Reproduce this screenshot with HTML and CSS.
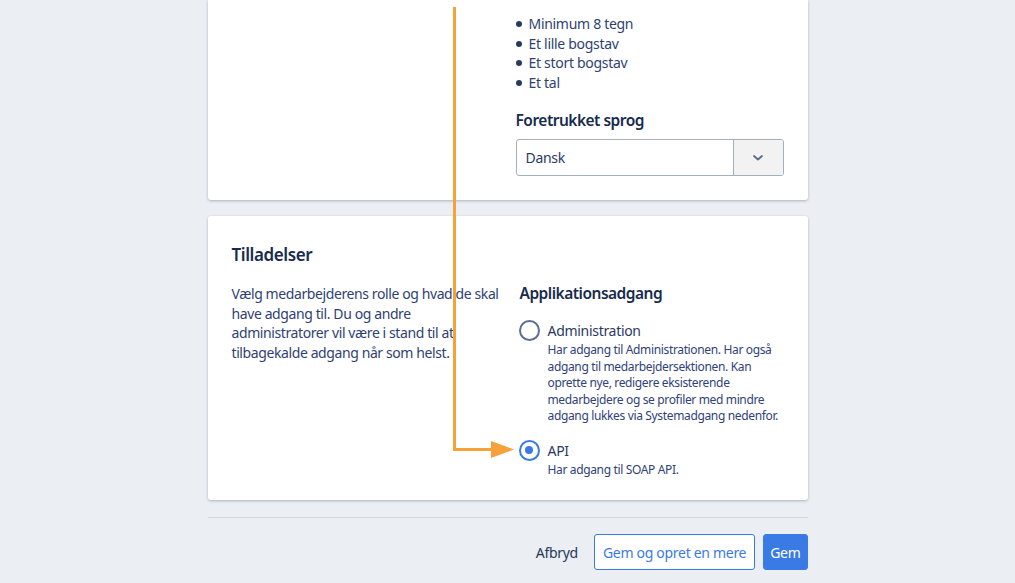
FILE: index.html
```html
<!DOCTYPE html>
<html lang="da">
<head>
<meta charset="utf-8">
<title>Medarbejder</title>
<link rel="stylesheet" href="styles.css">
</head>
<body>
<main class="page">
  <section class="card card-top">
    <div class="col-left"></div>
    <div class="col-right">
      <ul class="rules">
        <li>Minimum 8 tegn</li>
        <li>Et lille bogstav</li>
        <li>Et stort bogstav</li>
        <li>Et tal</li>
      </ul>
      <h3 class="field-title lang-title">Foretrukket sprog</h3>
      <div class="select">
        <span class="select-value">Dansk</span>
        <span class="select-btn">
          <svg width="12" height="8" viewBox="0 0 12 8"><path d="M2 2 L6 5.5 L10 2" fill="none" stroke="#5a6a85" stroke-width="1.8" stroke-linecap="round" stroke-linejoin="round"/></svg>
        </span>
      </div>
    </div>
  </section>

  <section class="card card-perm">
    <h2 class="card-title">Tilladelser</h2>
    <div class="perm-grid">
      <p class="intro">Vælg medarbejderens rolle og hvad de skal have adgang til. Du og andre administratorer vil være i stand til at tilbagekalde adgang når som helst.</p>
      <div class="col-right2">
        <h3 class="field-title access-title">Applikationsadgang</h3>
        <div class="option">
          <span class="radio"></span>
          <div class="opt-text">
            <div class="opt-label">Administration</div>
            <div class="opt-desc">Har adgang til Administrationen. Har også adgang til medarbejdersektionen. Kan oprette nye, redigere eksisterende medarbejdere og se profiler med mindre adgang lukkes via Systemadgang nedenfor.</div>
          </div>
        </div>
        <div class="option">
          <span class="radio radio-on"></span>
          <div class="opt-text">
            <div class="opt-label">API</div>
            <div class="opt-desc">Har adgang til SOAP API.</div>
          </div>
        </div>
      </div>
    </div>
  </section>

  <div class="actions">
    <span class="cancel">Afbryd</span>
    <button class="btn btn-outline">Gem og opret en mere</button>
    <button class="btn btn-primary">Gem</button>
  </div>
</main>

<svg class="arrow" width="1015" height="583" viewBox="0 0 1015 583">
  <path d="M454.5 7 V449.5 H494" fill="none" stroke="#f7a13b" stroke-width="3"/>
  <polygon points="491,441 514,449.5 491,458" fill="#f7a13b"/>
</svg>
</body>
</html>
```

FILE: styles.css
```css
* { box-sizing: border-box; }

html, body {
  margin: 0;
  padding: 0;
}

body {
  background: #ebeef3;
  font-family: "Noto Sans", "Open Sans", sans-serif;
  color: #2c3a61;
  font-size: 14px;
  letter-spacing: -0.3px;
  height: 583px;
  overflow: hidden;
  position: relative;
}

.page {
  width: 600px;
  margin: 0 auto;
}

.card {
  background: #fff;
  border-radius: 3px;
  box-shadow: 0 1px 3px rgba(9, 30, 66, 0.28);
}

.card-top {
  border-radius: 0 0 3px 3px;
  display: grid;
  grid-template-columns: 260px 1fr;
  column-gap: 24px;
  padding: 14px 24px 24px 24px;
}

.rules {
  list-style: none;
  margin: 0;
  padding: 0;
}

.rules li {
  position: relative;
  padding-left: 13px;
  line-height: 19.6px;
  color: #2f3f73;
}

.rules li::before {
  content: "";
  position: absolute;
  left: 0;
  top: 7px;
  width: 6px;
  height: 6px;
  border-radius: 50%;
  background: #2a3a5e;
}

.field-title {
  margin: 0;
  font-size: 15.5px;
  line-height: 20px;
  font-weight: 600;
  letter-spacing: -0.5px;
  color: #172b4d;
}

.lang-title {
  margin-top: 18px;
  margin-bottom: 9px;
}

.access-title {
  margin-top: -1px;
}

.select {
  display: flex;
  height: 37px;
  border: 1px solid #a3afbf;
  border-radius: 3px;
  overflow: hidden;
}

.select-value {
  flex: 1;
  display: flex;
  align-items: center;
  padding-left: 9px;
  color: #2c3a61;
}

.select-btn {
  width: 50px;
  border-left: 1px solid #a3afbf;
  background: #f2f2f2;
  display: flex;
  align-items: center;
  justify-content: center;
}

.card-perm {
  margin-top: 16px;
  padding: 25px 24px 22px 24px;
}

.card-title {
  margin: 0;
  font-size: 17px;
  line-height: 28px;
  font-weight: 600;
  letter-spacing: -0.4px;
  color: #172b4d;
}

.perm-grid {
  display: grid;
  grid-template-columns: 1fr 1fr;
  column-gap: 24px;
  margin-top: 15px;
}

.intro {
  margin: 0 -8px 0 0;
  line-height: 19.5px;
  letter-spacing: -0.4px;
  color: #2f3f73;
}

.option {
  display: flex;
  gap: 8px;
  margin-top: 18px;
  margin-left: -1px;
}

.option + .option {
  margin-top: 16px;
}

.radio {
  flex: none;
  width: 21px;
  height: 21px;
  border-radius: 50%;
  border: 2px solid #5b6f95;
  margin-top: -1px;
  position: relative;
}

.radio-on {
  border-color: #3a7ae4;
}

.radio-on::after {
  content: "";
  position: absolute;
  left: 4.5px;
  top: 4.5px;
  width: 8px;
  height: 8px;
  border-radius: 50%;
  background: #3a7ae4;
}

.opt-label {
  line-height: 20px;
  margin-bottom: 1px;
  color: #2c3a61;
}

.opt-desc {
  font-size: 12px;
  line-height: 16.5px;
  letter-spacing: -0.35px;
  color: #2f4278;
}

.actions {
  margin-top: 17px;
  border-top: 1px solid #d2d6dd;
  padding-top: 16px;
  display: flex;
  justify-content: flex-end;
  align-items: center;
  gap: 8px;
}

.cancel {
  color: #253858;
  margin-right: 8px;
}

.btn {
  height: 36px;
  font-family: inherit;
  font-size: 14px;
  letter-spacing: -0.3px;
  border-radius: 3px;
  padding: 0 8px;
  cursor: pointer;
}

.btn-outline {
  background: #fff;
  border: 1px solid #3a7ae4;
  color: #3a7ae4;
}

.btn-primary {
  background: #3a7ae4;
  border: 1px solid #3a7ae4;
  color: #fff;
  padding: 0 6px;
}

.arrow {
  position: absolute;
  left: 0;
  top: 0;
  pointer-events: none;
}
```
